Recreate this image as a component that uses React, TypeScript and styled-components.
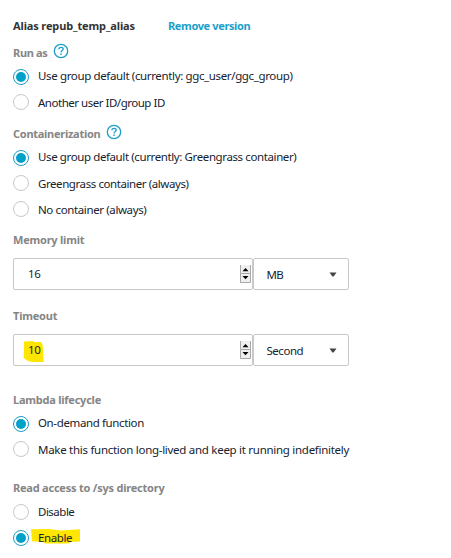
import React from 'react';
import styled, { createGlobalStyle } from 'styled-components';

const Global = createGlobalStyle`
  * { box-sizing: border-box; }
  body {
    margin: 0;
    background: #fff;
    color: #16232e;
    font: 400 11.5px/18px "Noto Sans", "Open Sans", sans-serif;
  }
`;

const Panel = styled.main`
  width: 451px;
  height: 558px;
  padding: 17px 0 0 13px;
  overflow: hidden;
  white-space: nowrap;
`;

const Header = styled.header`
  display: flex;
  height: 16px;
  font-size: 11px;
  font-weight: 700;
`;

const Title = styled.div`
  width: 155px;
  color: #333;
  letter-spacing: -0.13px;
`;

const RemoveLink = styled.a`
  color: #1a9fca;
  letter-spacing: -0.37px;
`;

const Section = styled.section<{ $gap: number }>`
  margin-top: ${(p) => p.$gap}px;
`;

const Label = styled.h2<{ $track: number }>`
  display: flex;
  height: 20px;
  margin: 0;
  font-size: 11px;
  line-height: 18px;
  font-weight: 700;
  color: #858585;
  letter-spacing: ${(p) => p.$track}px;
`;

const LabelText = styled.span<{ $width: number }>`
  width: ${(p) => p.$width}px;
`;

const HelpIcon = styled.svg`
  display: block;
  width: 16px;
  height: 16px;
  margin-top: -1px;
  overflow: visible;
`;

const OptionRow = styled.label<{ $textTop: number; $track: number }>`
  display: grid;
  grid-template-columns: 25px max-content;
  height: 26px;
  padding-top: ${(p) => p.$textTop}px;
  letter-spacing: ${(p) => p.$track}px;
`;

const Radio = styled.span<{ $on?: boolean; $offset: number }>`
  display: flex;
  align-items: center;
  justify-content: center;
  width: 16px;
  height: 16px;
  margin-top: ${(p) => p.$offset}px;
  border: 1px solid ${(p) => (p.$on ? '#1b9dc4' : '#c9c9c9')};
  border-radius: 50%;

  &::after {
    content: '';
    width: 10px;
    height: 10px;
    border-radius: 50%;
    background: ${(p) => (p.$on ? '#00a1c9' : 'transparent')};
  }
`;

const OptionText = styled.span`
  position: relative;
  z-index: 0;
`;

const Marker = styled.svg<{ $x: number; $y: number }>`
  position: absolute;
  left: ${(p) => p.$x}px;
  top: ${(p) => p.$y}px;
  z-index: -1;
`;

const Fields = styled.div`
  display: flex;
  height: 32px;
`;

const NumberField = styled.div`
  display: flex;
  justify-content: space-between;
  width: 240px;
  padding: 6px 1px 0 14px;
  border: 1px solid #c8c8c8;
  border-radius: 2px;
  letter-spacing: -0.3px;
`;

const Value = styled.span`
  position: relative;
  z-index: 0;
`;

const Spinner = styled.svg`
  display: block;
  width: 11px;
  height: 18px;
`;

const Select = styled.div<{ $track: number }>`
  display: flex;
  justify-content: space-between;
  width: 96px;
  padding: 7px 11px 0 12.5px;
  border: 1px solid #c8c8c8;
  border-radius: 2px;
  letter-spacing: ${(p) => p.$track}px;
`;

const Caret = styled.svg`
  display: block;
  width: 8px;
  height: 5px;
  margin-top: 6px;
`;

function Help() {
  return (
    <HelpIcon viewBox="0 0 16 16" fill="none" stroke="#1a9fca">
      <circle cx="8" cy="8" r="6.7" strokeWidth="1.3" />
      <path d="M5.9 6.3C5.9 5 6.8 4.3 8 4.3S10.2 5 10.2 6.1C10.2 7.5 8 7.5 8 9.4" strokeWidth="1.35" />
      <path d="M8 10.6v1.4" strokeWidth="1.4" />
    </HelpIcon>
  );
}

interface OptionProps {
  text: string;
  track: number;
  on?: boolean;
  textTop?: number;
  offset?: number;
  marked?: boolean;
}

function Option({ text, track, on, textTop = 4, offset = 0, marked }: OptionProps) {
  return (
    <OptionRow $textTop={textTop} $track={track}>
      <Radio $on={on} $offset={offset} />
      <OptionText>
        {marked && (
          <Marker $x={-7} $y={0} width="50" height="15" viewBox="0 0 50 15">
            <path d="M0 .3 18 0 30 1.5 49 .3V12.5L38 13V14.5H14L12 13 1 12.3Z" fill="#ffe600" />
          </Marker>
        )}
        {text}
      </OptionText>
    </OptionRow>
  );
}

interface QuantityProps {
  value: string;
  unit: string;
  track: number;
  marked?: boolean;
}

function Quantity({ value, unit, track, marked }: QuantityProps) {
  return (
    <Fields>
      <NumberField>
        <Value>
          {marked && (
            <Marker $x={-5} $y={0} width="21" height="22" viewBox="0 0 21 22">
              <path d="M1 .5 10 0 11 1H18Q20 3 20 8L20.7 21H9Q4 20 .7 17Z" fill="#ffe600" />
            </Marker>
          )}
          {value}
        </Value>
        <Spinner viewBox="0 0 11 18">
          <path d="M0 0H11V18H0Z" fill="#efefef" />
          <path d="M.5 0V8.5H10.5V0M.5 9V17.5H10.5V9" fill="none" stroke="#a9a9a9" />
          <path d="M5.5 3 8.5 6.2H2.5ZM5.5 14.2 8.5 11H2.5Z" fill="#000" />
        </Spinner>
      </NumberField>
      <Select $track={track}>
        {unit}
        <Caret viewBox="0 0 8 5">
          <path d="M.5.5H7.5L4.6 4.5H3.4Z" fill="#444" />
        </Caret>
      </Select>
    </Fields>
  );
}

export default function App() {
  return (
    <>
      <Global />
      <Panel>
        <Header>
          <Title>Alias repub_temp_alias</Title>
          <RemoveLink>Remove version</RemoveLink>
        </Header>
        <Section $gap={11}>
          <Label $track={-0.33}><LabelText $width={40}>Run as</LabelText><Help /></Label>
          <Option on text="Use group default (currently: ggc_user/ggc_group)" track={-0.36} textTop={3} offset={2} />
          <Option text="Another user ID/group ID" track={-0.48} />
        </Section>
        <Section $gap={9}>
          <Label $track={-0.27}><LabelText $width={93}>Containerization</LabelText><Help /></Label>
          <Option on text="Use group default (currently: Greengrass container)" track={-0.39} textTop={3} offset={2} />
          <Option text="Greengrass container (always)" track={-0.42} />
          <Option text="No container (always)" track={-0.38} />
        </Section>
        <Section $gap={8}>
          <Label $track={-0.22}>Memory limit</Label>
        </Section>
        <Section $gap={7}>
          <Quantity value="16" unit="MB" track={-0.8} />
        </Section>
        <Section $gap={17}>
          <Label $track={-0.22}>Timeout</Label>
        </Section>
        <Section $gap={7}>
          <Quantity value="10" unit="Second" track={-0.47} marked />
        </Section>
        <Section $gap={25}>
          <Label $track={-0.23}>Lambda lifecycle</Label>
          <Option on text="On-demand function" track={-0.37} textTop={3} offset={2} />
          <Option text="Make this function long-lived and keep it running indefinitely" track={-0.28} />
        </Section>
        <Section $gap={16}>
          <Label $track={-0.22}>Read access to /sys directory</Label>
          <Option text="Disable" track={-0.5} offset={1} />
          <Option on text="Enable" track={-0.4} offset={1} marked />
        </Section>
      </Panel>
    </>
  );
}
